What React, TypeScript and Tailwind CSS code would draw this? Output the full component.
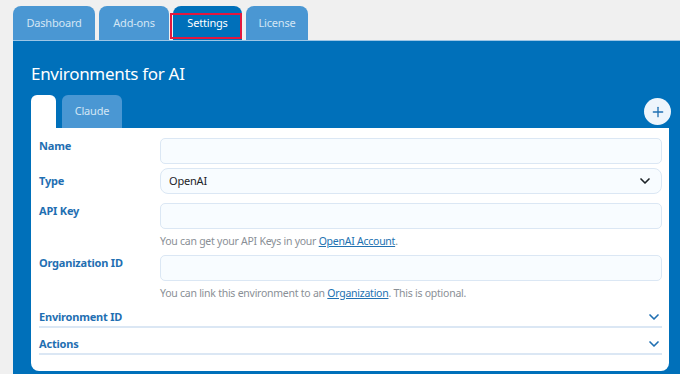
import React from 'react';
import { ChevronDown, Plus } from 'lucide-react';

const topTabs = [
  { label: 'Dashboard', w: 'w-[82px]' },
  { label: 'Add-ons', w: 'w-[70px]' },
  { label: 'Settings', w: 'w-[69px]', active: true },
  { label: 'License', w: 'w-[62px]' },
];

const Field: React.FC<{ label: string; children: React.ReactNode; help?: React.ReactNode }> = ({ label, children, help }) => (
  <div className="flex">
    <div className="w-[121px] text-[11px] leading-[16px] font-bold text-[#1f6fb2]">{label}</div>
    <div className="flex-1">
      {children}
      {help && <div className="pt-[4px] text-[10.5px] leading-[16px] tracking-[-0.25px] text-[#8a8f96]">{help}</div>}
    </div>
  </div>
);

const Input: React.FC = () => (
  <div className="h-[26px] rounded-[5px] border border-[#dbe7f4] bg-[#f8fcff]" />
);

const Collapse: React.FC<{ label: string }> = ({ label }) => (
  <div className="flex h-[27px] items-end justify-between border-b-2 border-[#dbe7f4] pb-[1px]">
    <span className="text-[11px] leading-[16px] font-bold text-[#1f6fb2]">{label}</span>
    <ChevronDown className="h-4 w-4 text-[#1f6fb2]" strokeWidth={2.5} />
  </div>
);

export default function App() {
  return (
    <div
      className="h-[374px] w-[680px] overflow-hidden bg-[#f0f0f0] pl-[13px] pt-[6px] tracking-[-0.2px]"
      style={{ fontFamily: '"Noto Sans", "Open Sans", sans-serif' }}
    >
      <div className="flex h-[34px] items-end gap-[4px]">
        {topTabs.map((t) => (
          <div
            key={t.label}
            className={`relative flex h-[34px] items-center justify-center rounded-t-[8px] text-[11px] ${t.w} ${
              t.active ? 'bg-[#0070ba] text-white' : 'bg-[#4a97d3] text-[#d3e6f5]'
            }`}
          >
            {t.label}
            {t.active && <div className="absolute left-[-3px] right-0 top-[7px] h-[26px] border-2 border-[#e3173e]" />}
          </div>
        ))}
      </div>
      <div className="h-[334px] border-t border-[#9cc6e6] bg-[#0070ba] pl-[18px] pr-[11px] pt-[21px]">
        <div className="text-[17px] leading-[24px] tracking-[-0.3px] text-white">Environments for AI</div>
        <div className="mt-[9px] flex h-[33px] items-end justify-between">
          <div className="flex h-[33px] gap-[6px]">
            <div className="w-[25px] rounded-t-[6px] bg-white" />
            <div className="flex w-[60px] items-center justify-center rounded-t-[6px] bg-[#4a97d3] text-[11px] text-[#d3e6f5]">Claude</div>
          </div>
          <div className="mb-[3px] mr-[-2px] flex h-[27px] w-[27px] items-center justify-center rounded-full bg-[#eef5fc]">
            <Plus className="h-4 w-4 text-[#1f6fb2]" strokeWidth={2} />
          </div>
        </div>
        <div className="h-[243px] rounded-b-[8px] bg-white pl-[8px] pr-[7px] pt-[10px]">
          <div className="flex flex-col gap-[4px]">
            <Field label="Name"><Input /></Field>
            <div className="flex">
              <div className="flex w-[121px] items-center text-[11px] font-bold text-[#1f6fb2]">Type</div>
              <div className="flex h-[26px] flex-1 items-center justify-between rounded-[8px] border border-[#dbe7f4] bg-[#f8fcff] pl-[8px] pr-[8px] text-[11px] text-[#1d2327]">
                OpenAI
                <ChevronDown className="h-4 w-4 text-[#1d2327]" strokeWidth={2.5} />
              </div>
            </div>
          </div>
          <div className="mt-[9px] flex flex-col gap-[6px]">
            <Field
              label="API Key"
              help={<>You can get your API Keys in your <span className="text-[#2271b1] underline">OpenAI Account</span>.</>}
            >
              <Input />
            </Field>
            <Field
              label="Organization ID"
              help={<>You can link this environment to an <span className="text-[#2271b1] underline">Organization</span>. This is optional.</>}
            >
              <Input />
            </Field>
          </div>
          <div className="flex flex-col">
            <Collapse label="Environment ID" />
            <Collapse label="Actions" />
          </div>
        </div>
      </div>
    </div>
  );
}
